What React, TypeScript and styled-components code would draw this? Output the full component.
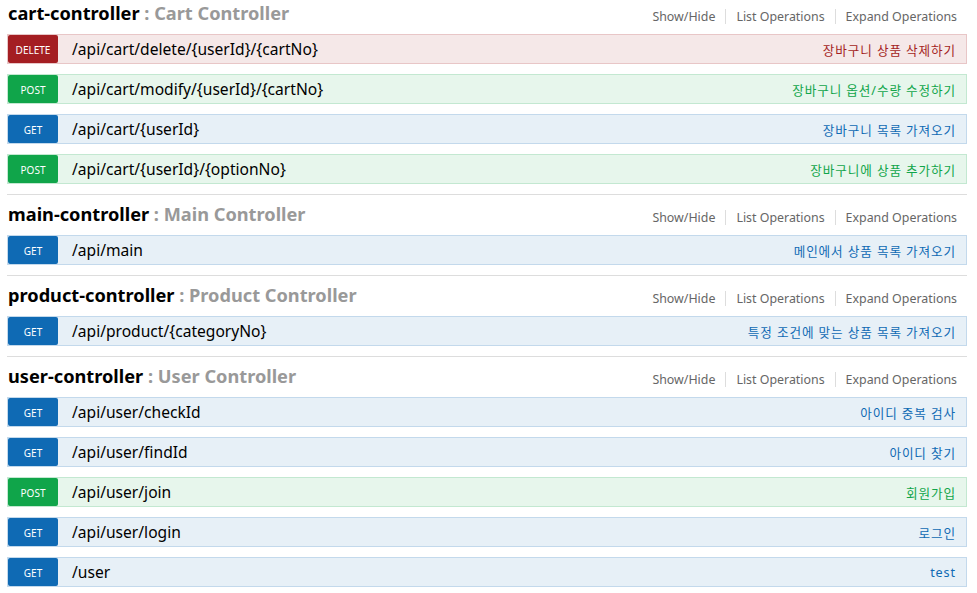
import styled, { createGlobalStyle } from "styled-components";

const GlobalStyle = createGlobalStyle`
  html, body {
    margin: 0;
    padding: 0;
    background: #fff;
  }
  body {
    font-family: "Noto Sans", "Noto Sans CJK KR", sans-serif;
    font-size: 14px;
    overflow: hidden;
  }
`;

type Method = "get" | "post" | "delete";

const palette: Record<Method, { bg: string; border: string; main: string }> = {
  get: { bg: "#e7f0f7", border: "#c3d9ec", main: "#0f6ab4" },
  post: { bg: "#e7f6ec", border: "#c3e8d1", main: "#10a54a" },
  delete: { bg: "#f5e8e8", border: "#e8c6c7", main: "#a41e22" },
};

const Resources = styled.ul`
  list-style: none;
  margin: -6px 0 0 7px;
  padding: 0;
  width: 960px;
`;

const Resource = styled.li`
  border-bottom: 1px solid #ddd;
`;

const ResourceHeading = styled.div`
  display: flex;
  justify-content: space-between;
  align-items: flex-start;
  height: 40px;
`;

const Title = styled.h2`
  margin: 0;
  padding: 8px 0 0 1px;
  font-size: 18.2px;
  line-height: 22px;
  font-weight: bold;
  color: #999;

  a {
    color: #000;
    text-decoration: none;
  }
`;

const HeadingOptions = styled.ul`
  display: flex;
  list-style: none;
  margin: 15px 10px 0 0;
  padding: 0;
`;

const HeadingOption = styled.li`
  padding: 0 10px;
  font-size: 12.4px;
  line-height: 15px;
  color: #666;
  border-right: 1px solid #ddd;

  &:last-child {
    padding-right: 0;
    border-right: none;
  }
`;

const Operations = styled.ul`
  list-style: none;
  margin: 0;
  padding: 0 0 10px;
`;

const Operation = styled.li<{ $method: Method }>`
  display: flex;
  align-items: center;
  height: 28px;
  margin: 0 0 10px;
  background: ${(p) => palette[p.$method].bg};
  border: 1px solid ${(p) => palette[p.$method].border};

  &:last-child {
    margin-bottom: 0;
  }
`;

const Badge = styled.span<{ $method: Method }>`
  display: flex;
  align-items: center;
  justify-content: center;
  box-sizing: border-box;
  width: 50px;
  height: 28px;
  padding-top: 2px;
  border-radius: 2px;
  background: ${(p) => palette[p.$method].main};
  color: #fff;
  font-size: 10px;
  text-transform: uppercase;
`;

const Path = styled.span`
  margin-left: 14px;
  font-size: 15.6px;
  color: #000;
`;

const Summary = styled.span<{ $method: Method }>`
  margin: 0 10px 0 auto;
  font-size: 12.6px;
  letter-spacing: 0.9px;
  color: ${(p) => palette[p.$method].main};
`;

type Op = { method: Method; path: string; summary: string };
type Group = { name: string; label: string; ops: Op[] };

const groups: Group[] = [
  {
    name: "cart-controller",
    label: "Cart Controller",
    ops: [
      { method: "delete", path: "/api/cart/delete/{userId}/{cartNo}", summary: "장바구니 상품 삭제하기" },
      { method: "post", path: "/api/cart/modify/{userId}/{cartNo}", summary: "장바구니 옵션/수량 수정하기" },
      { method: "get", path: "/api/cart/{userId}", summary: "장바구니 목록 가져오기" },
      { method: "post", path: "/api/cart/{userId}/{optionNo}", summary: "장바구니에 상품 추가하기" },
    ],
  },
  {
    name: "main-controller",
    label: "Main Controller",
    ops: [{ method: "get", path: "/api/main", summary: "메인에서 상품 목록 가져오기" }],
  },
  {
    name: "product-controller",
    label: "Product Controller",
    ops: [
      { method: "get", path: "/api/product/{categoryNo}", summary: "특정 조건에 맞는 상품 목록 가져오기" },
    ],
  },
  {
    name: "user-controller",
    label: "User Controller",
    ops: [
      { method: "get", path: "/api/user/checkId", summary: "아이디 중복 검사" },
      { method: "get", path: "/api/user/findId", summary: "아이디 찾기" },
      { method: "post", path: "/api/user/join", summary: "회원가입" },
      { method: "get", path: "/api/user/login", summary: "로그인" },
      { method: "get", path: "/user", summary: "test" },
    ],
  },
];

const App = () => {
  return (
    <>
      <GlobalStyle />
      <Resources>
        {groups.map((g) => (
          <Resource key={g.name}>
            <ResourceHeading>
              <Title>
                <a href="#">{g.name}</a> : {g.label}
              </Title>
              <HeadingOptions>
                <HeadingOption>Show/Hide</HeadingOption>
                <HeadingOption>List Operations</HeadingOption>
                <HeadingOption>Expand Operations</HeadingOption>
              </HeadingOptions>
            </ResourceHeading>
            <Operations>
              {g.ops.map((op) => (
                <Operation key={op.method + op.path} $method={op.method}>
                  <Badge $method={op.method}>{op.method}</Badge>
                  <Path>{op.path}</Path>
                  <Summary $method={op.method}>{op.summary}</Summary>
                </Operation>
              ))}
            </Operations>
          </Resource>
        ))}
      </Resources>
    </>
  );
};

export default App;
